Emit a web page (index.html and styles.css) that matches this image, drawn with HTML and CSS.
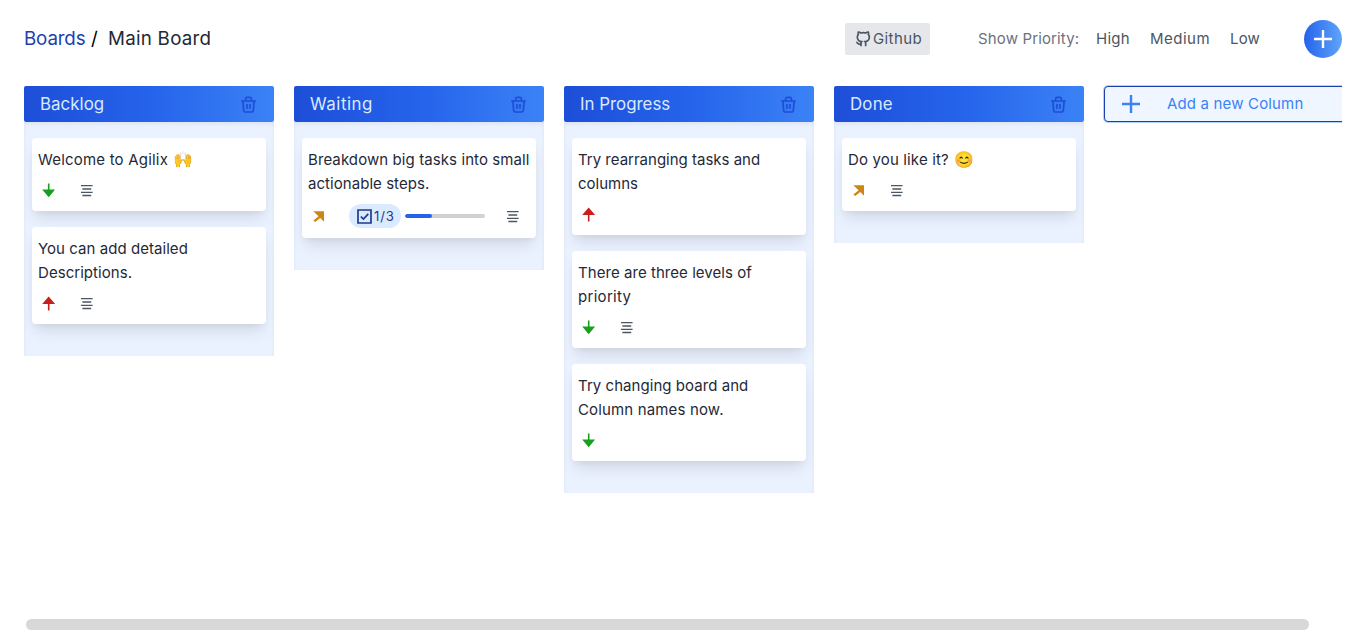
FILE: index.html
```
<!DOCTYPE html>
<html lang="en">
<head>
<meta charset="utf-8">
<title>Main Board</title>
<link rel="stylesheet" href="styles.css">
</head>
<body>
<svg class="sprite" aria-hidden="true">
  <symbol id="down" viewBox="0 0 21 21"><path d="M9.9 3.500h1.600v6.100h5.600l-6.400 7.600-6.500-7.600h5.700z"/></symbol>
  <symbol id="up" viewBox="0 0 21 21"><path d="M9.900 17.500h1.600v-6.600h5.600L10.700 3.400 4.200 10.900h5.700z"/></symbol>
  <symbol id="diag" viewBox="0 0 21 21"><path d="M5.300 5.200h10.700v10.600l-3.700-3.700-5.200 4-1.700-1.700 5.200-4.100z"/></symbol>
  <symbol id="lines" viewBox="0 0 18 21"><path d="M3 5.600h11.600M4.400 9h8.800M3 12.400h11.600M4.400 15.500h8.800" fill="none" stroke="currentColor" stroke-width="1.350"/></symbol>
  <symbol id="plus" viewBox="0 0 20 20"><path d="M10 1v18M1 10h18" fill="none" stroke="currentColor" stroke-width="2.400"/></symbol>
  <symbol id="trash" viewBox="0 0 17 17"><path d="M1.200 5h14.600M5.600 4.600V3q0-1.600 1.600-1.600h2.600q1.600 0 1.600 1.600v1.600M2.900 5l.7 9q.1 2 2 2h5.800q1.900 0 2-2l.7-9M7 8v4.800M10 8v4.800" fill="none" stroke="currentColor" stroke-width="1.700"/></symbol>
</svg>
<header class="topbar">
  <nav class="crumbs"><a class="boards">Boards</a><span class="slash">/</span><span class="current">Main Board</span></nav>
  <a class="github"><svg viewBox="0 0 24 24"><path d="M9 19.500c-5 1.500-5-2.500-7-3M16 23v-4.500a3.400 3.400 0 0 0-.9-2.600c3.100-.4 6.400-1.500 6.400-7a5.400 5.400 0 0 0-1.500-3.800A5 5 0 0 0 19.900 1.500S18.700 1.200 16 3a13.400 13.400 0 0 0-7 0C6.300 1.200 5.100 1.500 5.100 1.500A5 5 0 0 0 5 5.100a5.400 5.400 0 0 0-1.500 3.800c0 5.400 3.300 6.600 6.400 7a3.400 3.400 0 0 0-.9 2.600V23"/></svg><span class="ls-4">Github</span></a>
  <div class="filters"><span class="filter-label">Show Priority:</span><span class="high">High</span><span class="medium">Medium</span><span class="low">Low</span></div>
  <button class="add-task"><svg><use href="#plus"/></svg></button>
</header>
<main class="board">
  <section class="column">
    <div class="column-head"><h2>Backlog</h2><svg><use href="#trash"/></svg></div>
    <div class="cards">
      <article class="card"><p class="ls-2">Welcome to Agilix <span class="emoji">🙌</span></p><div class="meta"><svg class="arrow green"><use href="#down"/></svg><svg class="lines"><use href="#lines"/></svg></div></article>
      <article class="card"><p>You can add detailed<br>Descriptions.</p><div class="meta"><svg class="arrow red"><use href="#up"/></svg><svg class="lines"><use href="#lines"/></svg></div></article>
    </div>
  </section>
  <section class="column">
    <div class="column-head"><h2 class="ls-5">Waiting</h2><svg><use href="#trash"/></svg></div>
    <div class="cards">
      <article class="card"><p><span class="ls-05">Breakdown big tasks into small</span><br>actionable steps.</p>
        <div class="meta"><svg class="arrow amber"><use href="#diag"/></svg>
          <span class="pill"><svg viewBox="0 0 15 15"><path d="M1 1h13v13H1zM3.800 7.500l2.600 2.600 4.900-5.200"/></svg>1/3</span>
          <span class="progress"><span class="progress-fill"></span></span>
          <svg class="lines"><use href="#lines"/></svg></div>
      </article>
    </div>
  </section>
  <section class="column">
    <div class="column-head"><h2 class="ls-0">In Progress</h2><svg><use href="#trash"/></svg></div>
    <div class="cards">
      <article class="card"><p class="ls-0">Try rearranging tasks and<br>columns</p><div class="meta"><svg class="arrow red"><use href="#up"/></svg></div></article>
      <article class="card"><p>There are three levels of<br><span class="ls-3">priority</span></p><div class="meta"><svg class="arrow green"><use href="#down"/></svg><svg class="lines"><use href="#lines"/></svg></div></article>
      <article class="card"><p>Try changing board and<br><span class="ls-1">Column names now.</span></p><div class="meta"><svg class="arrow green"><use href="#down"/></svg></div></article>
    </div>
  </section>
  <section class="column">
    <div class="column-head"><h2 class="ls-2">Done</h2><svg><use href="#trash"/></svg></div>
    <div class="cards">
      <article class="card"><p class="ls-1">Do you like it? <span class="emoji">😊</span></p><div class="meta"><svg class="arrow amber"><use href="#diag"/></svg><svg class="lines"><use href="#lines"/></svg></div></article>
    </div>
  </section>
  <button class="add-column"><svg><use href="#plus"/></svg><span>Add a new Column</span></button>
</main>
<div class="scrollbar"><div class="thumb"></div></div>
</body>
</html>
```
FILE: styles.css
```
* { box-sizing: border-box; }
body { margin: 0; width: 1366px; height: 640px; padding: 20px 24px 10px; overflow: hidden; display: flex; flex-direction: column; background: #fff; color: #1f2937; font: 15px/24px Inter, "Noto Color Emoji", sans-serif; letter-spacing: .05px; }
svg { display: block; flex: none; fill: currentColor; }
p, h2 { margin: 0; font-weight: 400; }
button { font: inherit; letter-spacing: inherit; padding: 0; border: 0; }
.sprite { position: absolute; width: 0; height: 0; }
.emoji { margin-left: 1px; font-size: 16px; line-height: 1; }
.ls-0 { letter-spacing: 0; }
.ls-05 { letter-spacing: .09px; }
.ls-1 { letter-spacing: .15px; }
.ls-2 { letter-spacing: .2px; }
.ls-3 { letter-spacing: .3px; }
.ls-4 { letter-spacing: .4px; }
.ls-5 { letter-spacing: .54px; }

.topbar { display: flex; align-items: center; height: 38px; flex: none; }
.crumbs { display: flex; width: 821px; font-size: 18.75px; line-height: 28px; }
.boards { width: 67px; color: #1e40af; letter-spacing: -.15px; }
.slash { width: 17px; color: #000; }
.current { letter-spacing: .25px; }
.github { display: flex; align-items: center; width: 85px; height: 32px; padding-left: 10px; border-radius: 2px; background: #e5e7eb; color: #4b5563; }
.github svg { width: 16px; height: 16px; margin-right: 2px; fill: none; stroke: currentColor; stroke-width: 2.5; }
.filters { display: flex; flex: 1; padding-left: 48px; color: #4b5563; }
.filter-label { width: 118px; color: #6b7280; letter-spacing: .14px; }
.high { width: 54px; letter-spacing: .29px; }
.medium { width: 80px; letter-spacing: .48px; }
.low { letter-spacing: .17px; }
.add-task { display: flex; align-items: center; justify-content: center; width: 38px; height: 38px; border-radius: 50%; color: #fff; background: linear-gradient(90deg, #2563eb, #60a5fa); }
.add-task svg, .add-column svg { width: 20px; height: 20px; }

.board { display: flex; align-items: flex-start; gap: 20px; flex: 1; padding-top: 28px; overflow: hidden; }
.column { flex: none; width: 250px; }
.column-head { display: flex; align-items: center; justify-content: space-between; height: 36px; padding: 0 17px 0 16px; border-radius: 2px; color: #dbeafe; background: linear-gradient(90deg, #1d4ed8, #2563eb 50%, #3b82f6); }
.column-head h2 { font-size: 16.875px; line-height: 28px; }
.column-head svg { width: 17px; height: 17px; color: #1d4ed8; }
.cards { display: flex; flex-direction: column; gap: 16px; padding: 16px 8px 32px; background: #ebf2ff; box-shadow: inset 0 2px 4px rgba(0,0,0,.06); }
.card { padding: 10px 6px; border-radius: 4px; background: #fff; box-shadow: 0 10px 15px -3px rgba(0,0,0,.1), 0 4px 6px -2px rgba(0,0,0,.05); }
.card p { white-space: nowrap; }
.meta { display: flex; align-items: center; margin-top: 8px; }
.arrow { width: 21px; height: 21px; margin-right: 19px; }
.green { color: #16a01e; }
.red { color: #c81e1e; }
.amber { color: #cd8613; }
.lines { width: 18px; height: 21px; color: #4b5563; }
.pill { display: flex; align-items: center; gap: 2px; width: 52px; height: 24px; margin-left: 1px; padding-left: 8px; border-radius: 12px; background: #dbeafe; color: #1e3a8a; font-size: 13.125px; letter-spacing: .8px; }
.pill svg { width: 15px; height: 15px; fill: none; stroke: currentColor; stroke-width: 1.7; }
.progress { width: 80px; height: 4px; margin: 0 19px 0 4px; border-radius: 2px; background: #d1d1d1; overflow: hidden; }
.progress-fill { display: block; width: 33.3%; height: 4px; border-radius: 2px; background: #2563eb; }
.add-column { display: flex; align-items: center; flex: none; width: 250px; height: 36px; padding-left: 16px; gap: 26px; border: 1px solid #1e40af; border-radius: 4px; background: #eff6ff; color: #3b82f6; box-shadow: 0 0 0 1px rgba(96,165,250,.5); letter-spacing: .16px; }
.scrollbar { flex: none; padding-left: 2px; }
.thumb { width: 1283px; height: 11px; border-radius: 5.5px; background: #d8d8d8; }
```
